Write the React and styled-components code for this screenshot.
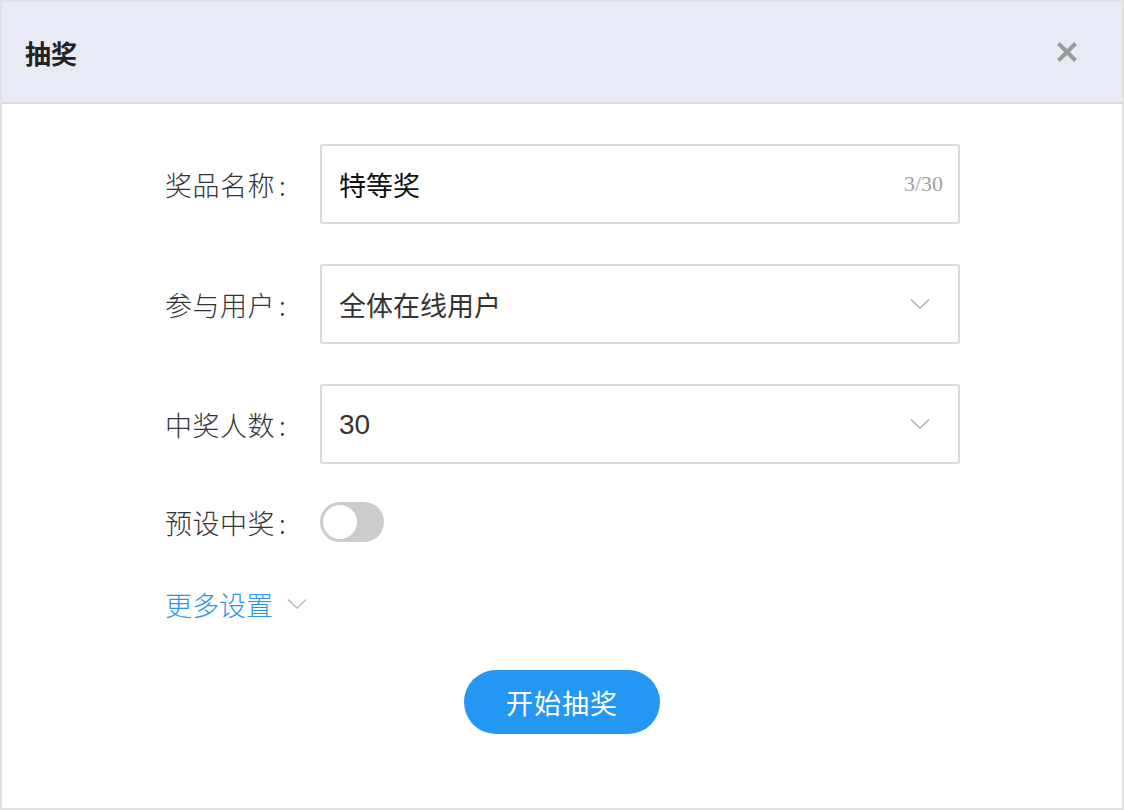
import React, { useState } from "react";
import styled, { createGlobalStyle } from "styled-components";

const GlobalStyle = createGlobalStyle`
  html, body {
    margin: 0;
    padding: 0;
    background: #ffffff;
  }
  * {
    box-sizing: border-box;
  }
`;

const cjk = `"Noto Sans CJK SC", "Noto Sans", sans-serif`;

const Dialog = styled.div`
  width: 1124px;
  height: 810px;
  border: 2px solid #e1e1e1;
  background: #fff;
  display: flex;
  flex-direction: column;
  font-family: ${cjk};
`;

const Header = styled.div`
  height: 102px;
  flex-shrink: 0;
  background: #e8eaf6;
  border-bottom: 2px solid #d4dae0;
  display: flex;
  align-items: center;
  justify-content: space-between;
  padding: 0 44px 0 23px;
`;

const Title = styled.h1`
  margin: 0;
  font-size: 26px;
  font-weight: 700;
  color: #222;
`;

const Close = styled.button`
  border: none;
  background: none;
  padding: 0;
  width: 22px;
  height: 22px;
  display: flex;
  align-items: center;
  justify-content: center;
  cursor: pointer;
`;

const Body = styled.div`
  padding: 40px 0 0 163px;
  display: flex;
  flex-direction: column;
`;

const Row = styled.div`
  display: flex;
  align-items: center;
  height: ${({ h }) => h}px;
  margin-bottom: ${({ mb }) => mb}px;
`;

const Label = styled.label`
  width: 155px;
  flex-shrink: 0;
  font-size: 27px;
  font-weight: 300;
  color: #333;
  letter-spacing: 0.5px;
`;

const Colon = styled.span`
  margin-left: 4px;
`;

const Field = styled.div`
  width: 640px;
  height: 80px;
  border: 2px solid #d3dbe0;
  border-radius: 3px;
  display: flex;
  align-items: center;
  justify-content: space-between;
  padding: 0 28px 0 17px;
`;

const FieldText = styled.span`
  font-size: ${({ latin }) => (latin ? 28 : 27)}px;
  color: ${({ dark }) => (dark ? "#111" : "#333")};
  font-family: ${({ latin }) =>
    latin ? `"Liberation Sans", Arial, sans-serif` : cjk};
  font-weight: 400;
  margin-top: ${({ latin }) => (latin ? 2 : 0)}px;
`;

const Counter = styled.span`
  font-family: "Liberation Serif", "Times New Roman", serif;
  font-size: 22px;
  color: #a0a0a0;
  margin-right: -13px;
`;

const Toggle = styled.button`
  width: 64px;
  height: 40px;
  border-radius: 20px;
  border: none;
  padding: 3px;
  background: ${({ on }) => (on ? "#2397f3" : "#cccccc")};
  display: flex;
  justify-content: ${({ on }) => (on ? "flex-end" : "flex-start")};
  cursor: pointer;
`;

const Knob = styled.span`
  width: 34px;
  height: 34px;
  border-radius: 50%;
  background: #fff;
`;

const MoreLink = styled.a`
  display: flex;
  align-items: center;
  gap: 14px;
  font-size: 27px;
  color: #2b95e9;
  font-weight: 300;
  cursor: pointer;
  text-decoration: none;
`;

const Footer = styled.div`
  display: flex;
  justify-content: center;
  margin-top: 44px;
  margin-left: -163px;
`;

const StartButton = styled.button`
  width: 196px;
  height: 64px;
  border-radius: 32px;
  border: none;
  background: #2397f3;
  color: #fff;
  font-family: ${cjk};
  font-size: 27px;
  font-weight: 400;
  letter-spacing: 1px;
  cursor: pointer;
`;

const Chevron = ({ color = "#a9b0b8", w = 20 }) => (
  <svg width={w} height={w / 2 + 2} viewBox="0 0 20 12" fill="none">
    <path d="M1 1.5 L10 10 L19 1.5" stroke={color} strokeWidth="1.6" />
  </svg>
);

const App = () => {
  const [preset, setPreset] = useState(false);
  return (
    <>
      <GlobalStyle />
      <Dialog>
        <Header>
          <Title>抽奖</Title>
          <Close aria-label="关闭">
            <svg width="20" height="20" viewBox="0 0 20 20">
              <path
                d="M1.5 1.5 L18.5 18.5 M18.5 1.5 L1.5 18.5"
                stroke="#9a9a9a"
                strokeWidth="4"
              />
            </svg>
          </Close>
        </Header>
        <Body>
          <Row h={80} mb={40}>
            <Label>
              奖品名称<Colon>:</Colon>
            </Label>
            <Field>
              <FieldText dark>特等奖</FieldText>
              <Counter>3/30</Counter>
            </Field>
          </Row>
          <Row h={80} mb={40}>
            <Label>
              参与用户<Colon>:</Colon>
            </Label>
            <Field>
              <FieldText>全体在线用户</FieldText>
              <Chevron />
            </Field>
          </Row>
          <Row h={80} mb={38}>
            <Label>
              中奖人数<Colon>:</Colon>
            </Label>
            <Field>
              <FieldText latin>30</FieldText>
              <Chevron />
            </Field>
          </Row>
          <Row h={40} mb={40}>
            <Label>
              预设中奖<Colon>:</Colon>
            </Label>
            <Toggle on={preset} onClick={() => setPreset(!preset)}>
              <Knob />
            </Toggle>
          </Row>
          <Row h={44} mb={0}>
            <MoreLink>
              更多设置
              <Chevron color="#b4b8c8" />
            </MoreLink>
          </Row>
          <Footer>
            <StartButton>开始抽奖</StartButton>
          </Footer>
        </Body>
      </Dialog>
    </>
  );
};

export default App;
